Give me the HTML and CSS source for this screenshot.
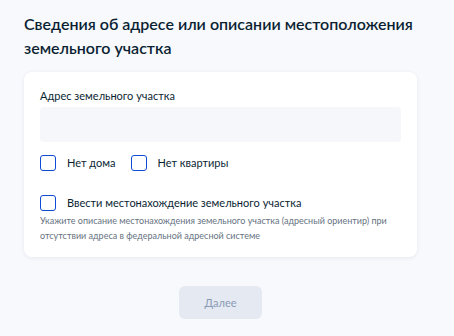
FILE: index.html
```html
<!DOCTYPE html>
<html lang="ru">
<head>
  <meta charset="UTF-8">
  <meta name="viewport" content="width=device-width, initial-scale=1.0">
  <title>Сведения об адресе</title>
  <link rel="stylesheet" href="styles.css">
</head>
<body>
  <h1>Сведения об адресе или описании местоположения земельного участка</h1>

  <div class="card">
    <label class="field-label" for="address">Адрес земельного участка</label>
    <input type="text" id="address" class="field">

    <div class="checks">
      <label class="check"><span class="box"></span>Нет дома</label>
      <label class="check"><span class="box"></span>Нет квартиры</label>
    </div>

    <label class="check check-location"><span class="box"></span>Ввести местонахождение земельного участка</label>
    <p class="hint">Укажите описание местонахождения земельного участка (адресный ориентир) при отсутствии адреса в федеральной адресной системе</p>
  </div>

  <div class="actions">
    <button disabled>Далее</button>
  </div>
</body>
</html>
```

FILE: styles.css
```css
body { margin: 0; padding: 12px 37px 16px 24px; background: #f8f9fc; font-family: Lato, "Noto Sans", sans-serif; color: #0b1f33; }
h1 { font-size: 16px; line-height: 24px; font-weight: 600; margin: 0 -10px 12px 0; }
.card { background: white; border-radius: 8px; padding: 16px 16px 14px; box-shadow: 0 1px 4px rgba(0,40,100,0.08); }
.field-label { display: block; font-size: 11px; line-height: 16px; color: #0b1f33; margin-bottom: 3px; }
.field { display: block; width: 100%; box-sizing: border-box; height: 35px; border: none; border-radius: 4px; background: #f5f7fa; margin-bottom: 13px; }
.checks { display: flex; gap: 15px; margin-bottom: 24px; }
.check { display: flex; align-items: center; font-size: 11px; line-height: 16px; color: #0b1f33; }
.box { width: 14px; height: 14px; border: 1px solid #0d4cd3; border-radius: 3px; margin-right: 11px; }
.hint { margin: 2px 0 0; font-size: 9px; line-height: 15px; color: #66727f; }
.actions { display: flex; justify-content: center; padding-top: 29px; }
button { width: 83px; height: 33px; border: none; border-radius: 6px; background: #e4e9f2; color: #8a9bb5; font-family: inherit; font-size: 11px; }
```
